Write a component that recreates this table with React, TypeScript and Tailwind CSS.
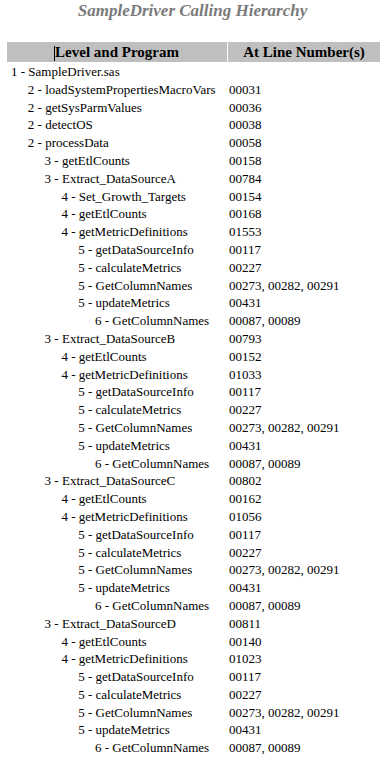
const rows: [number, string, string][] = [
  [1, 'SampleDriver.sas', ''],
  [2, 'loadSystemPropertiesMacroVars', '00031'],
  [2, 'getSysParmValues', '00036'],
  [2, 'detectOS', '00038'],
  [2, 'processData', '00058'],
  [3, 'getEtlCounts', '00158'],
  [3, 'Extract_DataSourceA', '00784'],
  [4, 'Set_Growth_Targets', '00154'],
  [4, 'getEtlCounts', '00168'],
  [4, 'getMetricDefinitions', '01553'],
  [5, 'getDataSourceInfo', '00117'],
  [5, 'calculateMetrics', '00227'],
  [5, 'GetColumnNames', '00273, 00282, 00291'],
  [5, 'updateMetrics', '00431'],
  [6, 'GetColumnNames', '00087, 00089'],
  [3, 'Extract_DataSourceB', '00793'],
  [4, 'getEtlCounts', '00152'],
  [4, 'getMetricDefinitions', '01033'],
  [5, 'getDataSourceInfo', '00117'],
  [5, 'calculateMetrics', '00227'],
  [5, 'GetColumnNames', '00273, 00282, 00291'],
  [5, 'updateMetrics', '00431'],
  [6, 'GetColumnNames', '00087, 00089'],
  [3, 'Extract_DataSourceC', '00802'],
  [4, 'getEtlCounts', '00162'],
  [4, 'getMetricDefinitions', '01056'],
  [5, 'getDataSourceInfo', '00117'],
  [5, 'calculateMetrics', '00227'],
  [5, 'GetColumnNames', '00273, 00282, 00291'],
  [5, 'updateMetrics', '00431'],
  [6, 'GetColumnNames', '00087, 00089'],
  [3, 'Extract_DataSourceD', '00811'],
  [4, 'getEtlCounts', '00140'],
  [4, 'getMetricDefinitions', '01023'],
  [5, 'getDataSourceInfo', '00117'],
  [5, 'calculateMetrics', '00227'],
  [5, 'GetColumnNames', '00273, 00282, 00291'],
  [5, 'updateMetrics', '00431'],
  [6, 'GetColumnNames', '00087, 00089'],
]

export default function App() {
  return (
    <div className="w-[385px] h-[767px] bg-white text-black [font-family:'Liberation_Serif',serif] overflow-hidden">
      <h1 className="pt-[1px] text-center text-[17px] leading-[20px] font-bold italic text-[#7a7a7a]">
        SampleDriver Calling Hierarchy
      </h1>
      <div className="mt-[21px] ml-[7px] mr-[5px]">
        <div className="grid grid-cols-[220px_1fr] gap-x-px h-[20px] text-[15px] font-bold leading-[20px]">
          <div className="bg-[#bfbfbf] text-center relative">
            <span className="relative">
              <span className="absolute left-[-1px] top-[2px] w-px h-[15px] bg-black" />
              Level and Program
            </span>
          </div>
          <div className="bg-[#bfbfbf] text-center">At Line Number(s)</div>
        </div>
        <div className="pt-[1px] text-[13px] leading-[17.8px]">
          {rows.map(([lvl, name, lines], i) => (
            <div key={i} className="grid grid-cols-[221px_1fr]">
              <div className="whitespace-nowrap" style={{ paddingLeft: 4 + (lvl - 1) * 16.8 }}>
                {lvl} - {name}
              </div>
              <div className="pl-[1px] whitespace-nowrap">{lines}</div>
            </div>
          ))}
        </div>
      </div>
    </div>
  )
}
